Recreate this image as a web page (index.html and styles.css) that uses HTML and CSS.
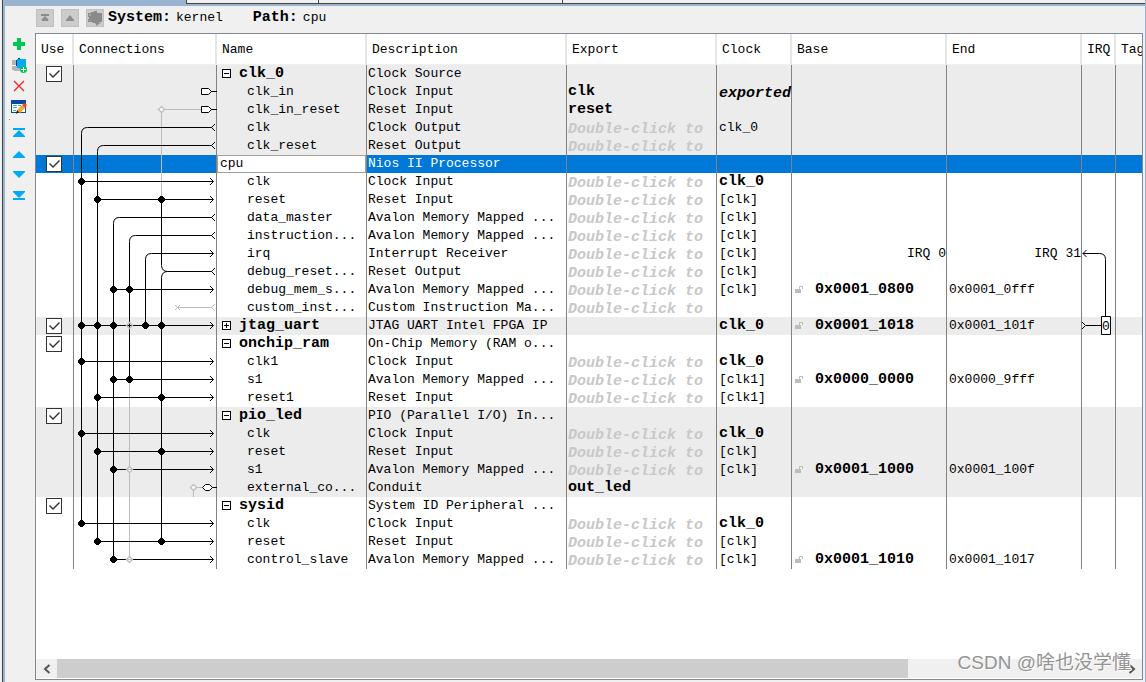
FILE: index.html
```html
<!DOCTYPE html>
<html lang="en">
<head>
<meta charset="utf-8">
<title>System Contents</title>
<link rel="stylesheet" href="styles.css">
</head>
<body>
<div class="window">
<div class="strip"><div class="tabs"><span class="tab tab-a"></span><span class="tab tab-b"></span><span class="tab tab-rest"></span></div></div>
<header class="toolbar">
<button class="tool" aria-label="Top of hierarchy"><svg width="18" height="18"><path d="M5 5h8v2H5zM9 7l4 4H5zM6 10h6v2H6z" fill="#8c8c8c"/></svg></button>
<button class="tool" aria-label="Up one level"><svg width="18" height="18"><path d="M9 6l4 5v1H5v-1z" fill="#8c8c8c"/></svg></button>
<button class="tool" aria-label="Drill into subsystem"><svg width="18" height="18"><path d="M2 4h3v-1h3v-1h3v2h5v9h-2l-3 4-2-3H7l-1-1H2v-3h1V8H2z" fill="#8a8a8a"/><path d="M3 5h2v2H3zM3 11h2v1H3zM13 14h2v1h-2z" fill="#aaa"/></svg></button>
<p class="crumb"><b>System:</b><span>kernel</span></p>
<p class="crumb"><b>Path:</b><span>cpu</span></p>
</header>
<div class="work">
<nav class="side">
<button aria-label="Add"><svg width="16" height="16"><path d="M6 2h4v4h4v4h-4v4H6v-4H2V6h4z" fill="#00c853"/></svg></button>
<button aria-label="Duplicate"><svg width="16" height="16"><path d="M1 3h4v5H1zM1 9h9v5H3v-1H1z" fill="#b5b5b5"/><path d="M7 1h2v1H7zM5 3h2v6H5z" fill="#123c78"/><path d="M6 2h9v9H6z" fill="#03a9f4"/><circle cx="12.500" cy="12.500" r="3.500" fill="#00c853"/><path d="M12 10h1v2h2v1h-2v2h-1v-2h-2v-1h2z" fill="#fff"/></svg></button>
<button aria-label="Remove"><svg width="16" height="16"><path d="M3 3l10 10M13 3L3 13" stroke="#f0282d" stroke-width="1.400"/></svg></button>
<button aria-label="Edit"><svg width="16" height="16"><path d="M0 1h15v13H0z" fill="#0d47a1"/><path d="M1 5h13v8H1z" fill="#fff"/><path d="M2 6h4v1H2zM2 8h4v1H2zM2 11h3v1H2zM7 6h3v1H7z" fill="#29b6f6"/><path d="M6 11l5-5 3 3-5 5z" fill="#f9a825"/><path d="M11 6l2-2 3 2-2 3z" fill="#f04a2e"/><path d="M6 11l2 2-3 2z" fill="#222"/></svg></button>
<i class="speck"></i>
<button aria-label="Move to top"><svg width="16" height="16"><path d="M2 3h12v2H2zM8 5l6 6v1H2v-1z" fill="#03a9f4"/></svg></button>
<button aria-label="Move up"><svg width="16" height="16"><path d="M8 5l6 6v1H2v-1z" fill="#03a9f4"/></svg></button>
<button aria-label="Move down"><svg width="16" height="16"><path d="M2 4h12v1l-6 6-6-6z" fill="#03a9f4"/></svg></button>
<button aria-label="Move to bottom"><svg width="16" height="16"><path d="M2 3h12v1l-6 6-6-6zM2 10h12v2H2z" fill="#03a9f4"/></svg></button>
</nav>
<main class="panel">
<svg class="defs" width="0" height="0" aria-hidden="true"><defs>
<g id="in" fill="none" stroke="#000"><path d="M136 -3.500l3.500 3.500l-3.500 3.500"/></g>
<g id="out" fill="none"><path d="M141 -3.500l-3.500 3.500l3.500 3.500"/></g>
<path id="dot" d="M-1 -4h3v1h1v1h1v3h-1v1h-1v1h-3v-1h-1v-1h-1v-3h1v-1h1z" transform="translate(-.500 .500)"/>
<path id="ring" d="M0 -3L3 0L0 3L-3 0z" fill="#fff" stroke="#bcbcbc" stroke-width="1.300"/>
<g id="lock" fill="#bdbdbd"><path d="M0 4h6v4H0z"/><path d="M4.500 4V1.500h3V4" fill="none" stroke="#bdbdbd"/></g>
</defs></svg>
<table class="grid">
<colgroup><col class="c-use"><col class="c-conn"><col class="c-name"><col class="c-desc"><col class="c-exp"><col class="c-clk"><col class="c-base"><col class="c-end"><col class="c-irq"><col></colgroup>
<thead><tr><th>Use</th><th>Connections</th><th>Name</th><th>Description</th><th>Export</th><th>Clock</th><th>Base</th><th>End</th><th>IRQ</th><th>Tags</th></tr></thead>
<tbody>
<tr class="alt"><td class="use"><input type="checkbox" checked aria-label="Use clk_0"></td><td class="host">
<svg class="wires" width="143" height="504" viewBox="0 0 143 504">
<g fill="none" stroke="#bcbcbc">
<path d="M87.500 44.500V134M88 44.500H128M55.500 314V494M104 242.500H138M119.500 422.500V432M119.500 422.500H129M101 240l5 5M106 240l-5 5"/>
<use href="#out" y="242.500"/>
</g>
<g fill="none" stroke="#000">
<path d="M138 62.500H13.500Q7.500 62.500 7.500 68.500V458.500M138 80.500H29.500Q23.500 80.500 23.500 86.500V476.500M138 152.500H45.500Q39.500 152.500 39.500 158.500V494.500M138 170.500H61.500Q55.500 170.500 55.500 176.500V314.500M139 188.500H77.500Q71.500 188.500 71.500 194.500V260.500M87.500 134.500V200.500Q88 206.500 93.500 206.500H138M93.500 206.500Q88 206.500 87.500 212.500V476.500"/>
<path d="M7.500 116.500H139M23.500 134.500H139M39.500 224.500H139M7.500 260.500H139M7.500 296.500H139M39.500 314.500H139M23.500 332.500H139M7.500 368.500H139M23.500 386.500H139M39.500 404.500H139M7.500 458.500H139M23.500 476.500H139M39.500 494.500H139"/>
<path d="M127.500 23.500h7l3 3l-3 3h-7zM127.500 41.500h7l3 3l-3 3h-7z" fill="#fff"/><path d="M137 26.500h6M137 44.500h6M138 422.500h5"/>
<path d="M131.500 419.500h4l3 3l-3 3h-4l-3-3z" fill="#fff"/>
<use href="#out" y="62.500"/><use href="#out" y="80.500"/><use href="#out" y="152.500"/><use href="#out" y="170.500"/><use href="#out" y="206.500"/>
</g>
<use href="#in" y="116.500"/><use href="#in" y="134.500"/><use href="#in" y="188.500"/><use href="#in" y="224.500"/><use href="#in" y="260.500"/><use href="#in" y="296.500"/><use href="#in" y="314.500"/><use href="#in" y="332.500"/><use href="#in" y="368.500"/><use href="#in" y="386.500"/><use href="#in" y="404.500"/><use href="#in" y="458.500"/><use href="#in" y="476.500"/><use href="#in" y="494.500"/>
<use href="#dot" x="7.500" y="116.500"/><use href="#dot" x="23.500" y="134.500"/><use href="#dot" x="87.500" y="134.500"/><use href="#dot" x="39.500" y="224.500"/><use href="#dot" x="55.500" y="224.500"/><use href="#dot" x="7.500" y="260.500"/><use href="#dot" x="23.500" y="260.500"/><use href="#dot" x="39.500" y="260.500"/><use href="#dot" x="71.500" y="260.500"/><use href="#dot" x="87.500" y="260.500"/><use href="#dot" x="7.500" y="296.500"/><use href="#dot" x="39.500" y="314.500"/><use href="#dot" x="55.500" y="314.500"/><use href="#dot" x="23.500" y="332.500"/><use href="#dot" x="87.500" y="332.500"/><use href="#dot" x="7.500" y="368.500"/><use href="#dot" x="23.500" y="386.500"/><use href="#dot" x="87.500" y="386.500"/><use href="#dot" x="39.500" y="404.500"/><use href="#dot" x="7.500" y="458.500"/><use href="#dot" x="23.500" y="476.500"/><use href="#dot" x="87.500" y="476.500"/><use href="#dot" x="39.500" y="494.500"/>
<use href="#ring" x="87.500" y="44.500"/><use href="#ring" x="119.500" y="422.500"/><use href="#ring" x="55.500" y="404.500"/><use href="#ring" x="55.500" y="494.500"/><path d="M55.500 257.500l3 3l-3 3l-3-3z" fill="none" stroke="#bcbcbc" stroke-width="1.300"/><path d="M53 404.500h5M53 494.500h5" stroke="#bcbcbc"/>
</svg></td><td class="mod"><button class="tog" aria-label="Collapse clk_0"></button>clk_0</td><td>Clock Source</td><td></td><td></td><td></td><td></td><td></td><td></td></tr>
<tr class="alt"><td></td><td></td><td class="port">clk_in</td><td>Clock Input</td><td class="strong">clk</td><td class="hint dark">exported</td><td></td><td></td><td></td><td></td></tr>
<tr class="alt"><td></td><td></td><td class="port">clk_in_reset</td><td>Reset Input</td><td class="strong">reset</td><td></td><td></td><td></td><td></td><td></td></tr>
<tr class="alt"><td></td><td></td><td class="port">clk</td><td>Clock Output</td><td class="hint">Double-click to</td><td>clk_0</td><td></td><td></td><td></td><td></td></tr>
<tr class="alt"><td></td><td></td><td class="port">clk_reset</td><td>Reset Output</td><td class="hint">Double-click to</td><td></td><td></td><td></td><td></td><td></td></tr>
<tr class="sel"><td class="use"><input type="checkbox" checked aria-label="Use cpu"></td><td></td><td class="edit"><input type="text" value="cpu" aria-label="Module name"></td><td>Nios II Processor</td><td></td><td></td><td></td><td></td><td></td><td></td></tr>
<tr><td></td><td></td><td class="port">clk</td><td>Clock Input</td><td class="hint">Double-click to</td><td class="strong">clk_0</td><td></td><td></td><td></td><td></td></tr>
<tr><td></td><td></td><td class="port">reset</td><td>Reset Input</td><td class="hint">Double-click to</td><td>[clk]</td><td></td><td></td><td></td><td></td></tr>
<tr><td></td><td></td><td class="port">data_master</td><td>Avalon Memory Mapped ...</td><td class="hint">Double-click to</td><td>[clk]</td><td></td><td></td><td></td><td></td></tr>
<tr><td></td><td></td><td class="port">instruction...</td><td>Avalon Memory Mapped ...</td><td class="hint">Double-click to</td><td>[clk]</td><td></td><td></td><td></td><td></td></tr>
<tr><td></td><td></td><td class="port">irq</td><td>Interrupt Receiver</td><td class="hint">Double-click to</td><td>[clk]</td><td class="right">IRQ 0</td><td class="right">IRQ 31</td><td class="host"><svg class="wires" width="33" height="92" viewBox="0 0 33 92"><path d="M1 8.500H17.500Q23.500 8.500 23.500 14.500V71M4.500 5l-3.500 3.500l3.500 3.500M0 77l3.500 3.500l-3.500 3.500M4 80.500H19" fill="none" stroke="#000"/><path d="M19.500 71.500h9v18h-9z" fill="#fff" stroke="#000"/><text class="irqno" x="20" y="85">0</text></svg></td><td></td></tr>
<tr><td></td><td></td><td class="port">debug_reset...</td><td>Reset Output</td><td class="hint">Double-click to</td><td>[clk]</td><td></td><td></td><td></td><td></td></tr>
<tr><td></td><td></td><td class="port">debug_mem_s...</td><td>Avalon Memory Mapped ...</td><td class="hint">Double-click to</td><td>[clk]</td><td class="strong"><svg class="lock" width="8" height="8"><use href="#lock"/></svg>0x0001_0800</td><td>0x0001_0fff</td><td></td><td></td></tr>
<tr><td></td><td></td><td class="port">custom_inst...</td><td>Custom Instruction Ma...</td><td class="hint">Double-click to</td><td></td><td></td><td></td><td></td><td></td></tr>
<tr class="alt"><td class="use"><input type="checkbox" checked aria-label="Use jtag_uart"></td><td></td><td class="mod"><button class="tog plus" aria-label="Expand jtag_uart"></button>jtag_uart</td><td>JTAG UART Intel FPGA IP</td><td></td><td class="strong">clk_0</td><td class="strong"><svg class="lock" width="8" height="8"><use href="#lock"/></svg>0x0001_1018</td><td>0x0001_101f</td><td></td><td></td></tr>
<tr><td class="use"><input type="checkbox" checked aria-label="Use onchip_ram"></td><td></td><td class="mod"><button class="tog" aria-label="Collapse onchip_ram"></button>onchip_ram</td><td>On-Chip Memory (RAM o...</td><td></td><td></td><td></td><td></td><td></td><td></td></tr>
<tr><td></td><td></td><td class="port">clk1</td><td>Clock Input</td><td class="hint">Double-click to</td><td class="strong">clk_0</td><td></td><td></td><td></td><td></td></tr>
<tr><td></td><td></td><td class="port">s1</td><td>Avalon Memory Mapped ...</td><td class="hint">Double-click to</td><td>[clk1]</td><td class="strong"><svg class="lock" width="8" height="8"><use href="#lock"/></svg>0x0000_0000</td><td>0x0000_9fff</td><td></td><td></td></tr>
<tr><td></td><td></td><td class="port">reset1</td><td>Reset Input</td><td class="hint">Double-click to</td><td>[clk1]</td><td></td><td></td><td></td><td></td></tr>
<tr class="alt"><td class="use"><input type="checkbox" checked aria-label="Use pio_led"></td><td></td><td class="mod"><button class="tog" aria-label="Collapse pio_led"></button>pio_led</td><td>PIO (Parallel I/O) In...</td><td></td><td></td><td></td><td></td><td></td><td></td></tr>
<tr class="alt"><td></td><td></td><td class="port">clk</td><td>Clock Input</td><td class="hint">Double-click to</td><td class="strong">clk_0</td><td></td><td></td><td></td><td></td></tr>
<tr class="alt"><td></td><td></td><td class="port">reset</td><td>Reset Input</td><td class="hint">Double-click to</td><td>[clk]</td><td></td><td></td><td></td><td></td></tr>
<tr class="alt"><td></td><td></td><td class="port">s1</td><td>Avalon Memory Mapped ...</td><td class="hint">Double-click to</td><td>[clk]</td><td class="strong"><svg class="lock" width="8" height="8"><use href="#lock"/></svg>0x0001_1000</td><td>0x0001_100f</td><td></td><td></td></tr>
<tr class="alt"><td></td><td></td><td class="port">external_co...</td><td>Conduit</td><td class="strong">out_led</td><td></td><td></td><td></td><td></td><td></td></tr>
<tr><td class="use"><input type="checkbox" checked aria-label="Use sysid"></td><td></td><td class="mod"><button class="tog" aria-label="Collapse sysid"></button>sysid</td><td>System ID Peripheral ...</td><td></td><td></td><td></td><td></td><td></td><td></td></tr>
<tr><td></td><td></td><td class="port">clk</td><td>Clock Input</td><td class="hint">Double-click to</td><td class="strong">clk_0</td><td></td><td></td><td></td><td></td></tr>
<tr><td></td><td></td><td class="port">reset</td><td>Reset Input</td><td class="hint">Double-click to</td><td>[clk]</td><td></td><td></td><td></td><td></td></tr>
<tr><td></td><td></td><td class="port">control_slave</td><td>Avalon Memory Mapped ...</td><td class="hint">Double-click to</td><td>[clk]</td><td class="strong"><svg class="lock" width="8" height="8"><use href="#lock"/></svg>0x0001_1010</td><td>0x0001_1017</td><td></td><td></td></tr>
</tbody>
</table>
<div class="scroll">
<button aria-label="Scroll left"><svg width="8" height="10"><path d="M6.500 1L2 5l4.500 4" fill="none" stroke="#555" stroke-width="2"/></svg></button>
<div class="track"><div class="thumb"></div></div>
<button aria-label="Scroll right"><svg width="8" height="10"><path d="M1.500 1L6 5L1.500 9" fill="none" stroke="#555" stroke-width="2"/></svg></button>
</div>
</main>
</div>
<div class="mark">CSDN @啥也没学懂</div>
</div>
</body>
</html>
```
FILE: styles.css
```css
* { box-sizing: border-box; }
body {
  margin: 0;
  background: #f0f0f0;
  color: #000;
  font: 13px/18px "Liberation Mono", "Noto Sans CJK SC", monospace;
}
button { padding: 0; border: 0; background: none; }
svg { display: block; }
.window {
  position: relative;
  display: flex;
  flex-direction: column;
  height: 100vh;
  margin-left: 2px;
  border-left: 1px solid #444;
  border-right: 1px solid #9ab4d2;
}
.strip { height: 6px; padding-left: 183px; background: #99b4d1; }
.tabs { display: flex; height: 4px; border-bottom: 1px solid #444; background: #f0f0f0; }
.tab { border-left: 1px solid #444; }
.tab-a { width: 132px; }
.tab-b { width: 244px; }
.tab-rest { flex: 1; }
.toolbar {
  display: flex;
  align-items: flex-start;
  height: 27px;
  padding: 3px 0 0 31px;
  border-left: 2px solid #99b4d1;
}
.tool { width: 18px; height: 18px; margin-right: 7px; background: #ccc; box-shadow: inset 0 0 0 1px #c0c0c0; }
.crumb { display: flex; gap: 5px; margin: 0 30px 0 0; }
.tool + .crumb { margin-left: -3px; }
.crumb b { font-size: 15px; }
.work { display: flex; flex: 1; min-height: 0; padding: 0 2px 2px 0; border-left: 2px solid #99b4d1; }
.side { display: flex; flex-direction: column; align-items: center; width: 30px; padding-right: 2px; }
.side button { display: grid; place-items: center; width: 21px; height: 21px; }
.speck { width: 1px; height: 1px; margin: 2px 20px 2px 0; background: #888; }
.panel {
  display: flex;
  flex: 1;
  flex-direction: column;
  min-width: 0;
  overflow: hidden;
  border: 1px solid #828790;
  background: #fff;
}
.defs { position: absolute; }
.grid { width: 100%; border-collapse: separate; border-spacing: 0; table-layout: fixed; }
.c-use { width: 38px; }
.c-conn { width: 143px; }
.c-name, .c-exp { width: 150px; }
.c-desc { width: 200px; }
.c-clk { width: 75px; }
.c-base { width: 155px; }
.c-end { width: 135px; }
.c-irq { width: 34px; }
th {
  height: 31px;
  padding: 1px 0 0 5px;
  overflow: hidden;
  border-right: 2px solid #e5e5e5;
  border-bottom: 1px solid #f0f0f0;
  font-weight: normal;
  text-align: left;
  white-space: nowrap;
}
th:last-child { border-right: 0; }
td {
  height: 18px;
  padding: 0 0 0 1px;
  border-right: 1px solid #828282;
  line-height: 18px;
  white-space: nowrap;
}
td:last-child { border-right: 0; }
td:first-child + td, td:nth-child(n+6) { padding-left: 2px; }
.alt { background: #ececec; }
.sel { background: #0078d7; color: #fff; }
.host { position: relative; }
.wires { position: absolute; top: 0; left: 0; z-index: 1; }
.irqno { font: 13px "Liberation Mono", monospace; }
.use { padding-left: 10px; }
.use input {
  display: block;
  width: 16px;
  height: 16px;
  margin: 0;
  appearance: none;
  border: 1px solid #333;
  background: #fff;
}
.use input:checked::before {
  display: block;
  width: 14px;
  height: 14px;
  background: #333;
  clip-path: polygon(2px 7px, 3px 6px, 6px 9px, 12px 3px, 13px 4px, 6px 11px);
  content: "";
}
.mod { font-size: 15px; font-weight: bold; }
td.mod { padding-left: 5px; }
.tog {
  display: inline-block;
  width: 9px;
  height: 9px;
  margin-right: 8px;
  border: 1px solid #000;
  background: linear-gradient(#000, #000) center / 5px 1px no-repeat #fff;
}
.plus {
  background: linear-gradient(#000, #000) center / 5px 1px no-repeat, linear-gradient(#000, #000) center / 1px 5px no-repeat #fff;
}
td.port { padding-left: 30px; }
td.edit { padding: 0; }
.edit input {
  display: block;
  width: 100%;
  height: 18px;
  padding: 0 2px;
  border: 1px solid #a0a0a0;
  background: #fff;
  color: #000;
  font: inherit;
}
.strong { font-size: 15px; font-weight: bold; }
.hint {
  padding-top: 4px;
  color: #c8c8c8;
  font-size: 15px;
  font-style: italic;
  font-weight: bold;
  line-height: 14px;
}
.dark { color: #000; }
.right { text-align: right; }
.lock { display: inline-block; margin: 0 12px 0 1px; }
.scroll { display: flex; flex: none; height: 19px; margin-top: auto; margin-bottom: 1px; background: #f0f0f0; }
.scroll button { display: grid; place-items: center; width: 21px; }
.track { flex: 1; }
.thumb { width: 80%; height: 100%; background: #cdcdcd; }
.mark {
  position: absolute;
  right: 14px;
  bottom: 5px;
  color: #949494;
  font: 19px/28px "Liberation Sans", "Noto Sans CJK SC", sans-serif;
  text-shadow: 1px 1px 0 #fff;
}
```
